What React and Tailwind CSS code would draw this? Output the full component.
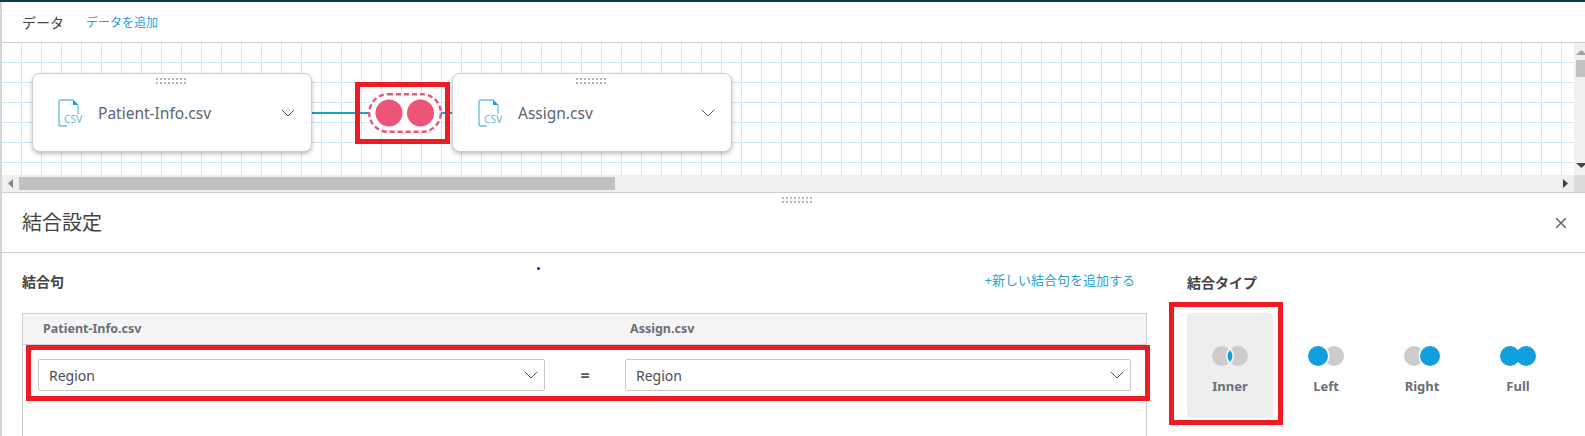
import React from "react";
import { ChevronDown, X } from "lucide-react";

const FONT = "font-['Noto_Sans','Noto_Sans_CJK_JP',sans-serif]";

const Handle = ({ className }) => (
  <svg width="32" height="6" viewBox="0 0 32 6" className={className}>
    {[0, 4].map((y) =>
      [0, 1, 2, 3, 4, 5, 6, 7].map((i) => (
        <rect key={`${y}-${i}`} x={i * 4} y={y} width="2" height="2" fill="#b5b5b5" />
      ))
    )}
  </svg>
);

const CsvIcon = () => (
  <div className="relative w-[24px] h-[28px] shrink-0">
    <svg width="24" height="28" viewBox="0 0 24 28" className="absolute left-0 top-0">
      <path d="M15 1H3Q1 1 1 3V25Q1 27 3 27H9" fill="none" stroke="#6cbde3" strokeWidth="1.4" />
      <path d="M15 1L20 6V15" fill="none" stroke="#6cbde3" strokeWidth="1.2" />
      <path d="M15 1V6H20Z" fill="#1a9fd9" />
    </svg>
    <span className="absolute left-[6px] top-[14px] text-[10px] leading-[12px] text-[#6cb2d8] tracking-[0.2px]">CSV</span>
  </div>
);

const DataNode = ({ name, className }) => (
  <div className={`absolute top-[30px] w-[280px] h-[79px] bg-white border border-[#cfcfcf] rounded-[8px] shadow-[0_2px_4px_rgba(0,0,0,0.25)] flex items-center pl-[25px] pr-[11px] ${className}`}>
    <Handle className="absolute left-[123px] top-[4px]" />
    <CsvIcon />
    <span className="ml-[16px] mt-[2px] flex-1 text-[15.5px] text-[#596673]">{name}</span>
    <ChevronDown size={24} strokeWidth={1} className="text-[#555]" />
  </div>
);

const FieldSelect = ({ className }) => (
  <div className={`h-[32px] bg-white border border-[#c8c8c8] rounded-[2px] flex items-center justify-between pl-[10px] pr-[1px] text-[14px] text-[#4a4f55] ${className}`}>
    <span>Region</span>
    <ChevronDown size={24} strokeWidth={1} className="text-[#555]" />
  </div>
);

// 結合タイプ icons: two 20px circles overlapping by 4px
const JoinIcon = ({ type }) => (
  <svg width="36" height="20" viewBox="0 0 36 20">
    {type === "inner" && (
      <>
        <circle cx="10" cy="10" r="10" fill="#cccccc" />
        <circle cx="26" cy="10" r="10" fill="#cccccc" />
        <path d="M18 1Q26 10 18 19Q10 10 18 1Z" fill="#f6f6f6" />
        <path d="M18 4Q23 10 18 16Q13 10 18 4Z" fill="#129fdd" />
      </>
    )}
    {type === "left" && (
      <>
        <circle cx="26" cy="10" r="10" fill="#cccccc" />
        <circle cx="10" cy="10" r="11.5" fill="#ffffff" />
        <circle cx="10" cy="10" r="10" fill="#129fdd" />
      </>
    )}
    {type === "right" && (
      <>
        <circle cx="10" cy="10" r="10" fill="#cccccc" />
        <circle cx="26" cy="10" r="11.5" fill="#ffffff" />
        <circle cx="26" cy="10" r="10" fill="#129fdd" />
      </>
    )}
    {type === "full" && (
      <>
        <circle cx="10" cy="10" r="10" fill="#129fdd" />
        <circle cx="26" cy="10" r="10" fill="#129fdd" />
      </>
    )}
  </svg>
);

const JoinType = ({ label, type, active }) => (
  <div className={`w-[86px] h-[105px] rounded-[4px] flex flex-col items-center pt-[33px] ${active ? "bg-[#eeeeee]" : ""}`}>
    <JoinIcon type={type} />
    <span className="mt-[10px] text-[13px] leading-[20px] font-bold text-[#687078]">{label}</span>
  </div>
);

// the join node between the two data nodes
const JoinNode = () => (
  <svg width="74" height="40" viewBox="0 0 74 40" className="absolute left-[366px] top-[50px]">
    <rect x="1.2" y="1.2" width="71.6" height="37.6" rx="18.8" fill="#ffffff" stroke="#ec5578" strokeWidth="2.4" strokeDasharray="5 3" />
    <circle cx="21" cy="20" r="13.5" fill="#ec5578" />
    <circle cx="52.5" cy="20" r="13.5" fill="#ec5578" />
  </svg>
);

const App = () => {
  return (
    <div className={`relative w-[1585px] h-[436px] overflow-hidden bg-white ${FONT}`}>
      <div className="h-[2px] bg-[#0f3b4b]" />

      <div className="border-l-2 border-[#d5d5d5]">
        {/* Data header */}
        <div className="h-[40px] flex items-center pl-[20px] border-b border-[#cfcfcf] box-content">
          <span className="text-[14px] text-[#444]">データ</span>
          <span className="ml-[22px] mt-[1px] text-[12px] text-[#2a9fd6]">データを追加</span>
        </div>

        {/* Canvas */}
        <div className="flex h-[132px]">
          <div className="relative flex-1 overflow-hidden bg-[linear-gradient(#cfe8f3_1px,transparent_1px),linear-gradient(90deg,#cfe8f3_1px,transparent_1px)] bg-[size:20px_20px] bg-[position:19px_19px]">
            <div className="absolute left-[309px] top-[69px] w-[142px] h-[2px] bg-[#1a9fd9]" />
            <DataNode name="Patient-Info.csv" className="left-[30px]" />
            <DataNode name="Assign.csv" className="left-[450px]" />
            <JoinNode />
          </div>
          <div className="w-[11px] bg-[#f0f0f0] flex flex-col items-start">
            <svg width="11" height="5" viewBox="0 0 11 5" className="mt-[7px] ml-[2px] shrink-0"><path d="M0 5L5.5 0L11 5Z" fill="#a3a3a3" /></svg>
            <div className="mt-[5px] ml-[2px] w-[9px] h-[17px] bg-[#c1c1c1]" />
            <svg width="11" height="5" viewBox="0 0 11 5" className="mt-auto mb-[7px] ml-[2px] shrink-0"><path d="M0 0L5.5 5L11 0Z" fill="#444" /></svg>
          </div>
        </div>

        {/* Horizontal scrollbar */}
        <div className="flex h-[17px] bg-[#f0f0f0]">
          <div className="w-[17px] flex items-center justify-center">
            <svg width="5" height="9" viewBox="0 0 5 9"><path d="M5 0L0 4.5L5 9Z" fill="#888" /></svg>
          </div>
          <div className="flex-1 flex items-center">
            <div className="w-[596px] h-[13px] bg-[#c1c1c1]" />
          </div>
          <div className="w-[17px] flex items-center justify-center">
            <svg width="5" height="9" viewBox="0 0 5 9"><path d="M0 0L5 4.5L0 9Z" fill="#444" /></svg>
          </div>
          <div className="w-[11px] bg-[#dcdcdc]" />
        </div>

        {/* Join settings header */}
        <div className="relative h-[61px] border-t border-b border-[#cfcfcf] flex items-center justify-between pl-[20px] pr-[15px]">
          <Handle className="absolute left-[780px] top-[4px]" />
          <span className="text-[20px] text-[#444]">結合設定</span>
          <X size={18} strokeWidth={2} className="text-[#666]" />
        </div>

        {/* Join settings body */}
        <div className="flex pl-[20px]">
          <div className="w-[1125px]">
            <div className="h-[30px] mt-[13px] flex items-center justify-between pr-[12px]">
              <span className="text-[14px] font-bold text-[#444]">結合句</span>
              <span className="text-[13px] text-[#2a9fd6]">+新しい結合句を追加する</span>
            </div>
            <div className="mt-[17px] h-[130px] border border-[#cfcfcf]">
              <div className="h-[30px] bg-[#f5f5f5] border-b border-[#cfcfcf] box-content flex items-center text-[12.5px] font-bold text-[#687078]">
                <span className="ml-[20px] w-[587px]">Patient-Info.csv</span>
                <span>Assign.csv</span>
              </div>
              <div className="flex items-center px-[15px] pt-[14px]">
                <FieldSelect className="w-[507px]" />
                <span className="flex-1 text-center text-[16px] font-bold text-[#555]">=</span>
                <FieldSelect className="w-[506px]" />
              </div>
            </div>
          </div>

          <div className="ml-[35px] w-[384px] pt-[14px]">
            <div className="h-[30px] pl-[5px] flex items-center text-[14px] font-bold text-[#444]">結合タイプ</div>
            <div className="mt-[16px] grid grid-cols-4 justify-items-center">
              <JoinType label="Inner" type="inner" active />
              <JoinType label="Left" type="left" />
              <JoinType label="Right" type="right" />
              <JoinType label="Full" type="full" />
            </div>
          </div>
        </div>
      </div>

      {/* Red annotation boxes drawn over the screenshot */}
      <div className="absolute left-[355px] top-[82px] w-[95px] h-[62px] border-[5px] border-[#ed1c24]" />
      <div className="absolute left-[26px] top-[345px] w-[1124px] h-[56px] border-[5px] border-[#ed1c24]" />
      <div className="absolute left-[1169px] top-[302px] w-[114px] h-[123px] border-[5px] border-[#ed1c24]" />
      <div className="absolute left-[537px] top-[267px] w-[3px] h-[3px] rounded-full bg-[#0000ff]" />
    </div>
  );
};

export default App;
